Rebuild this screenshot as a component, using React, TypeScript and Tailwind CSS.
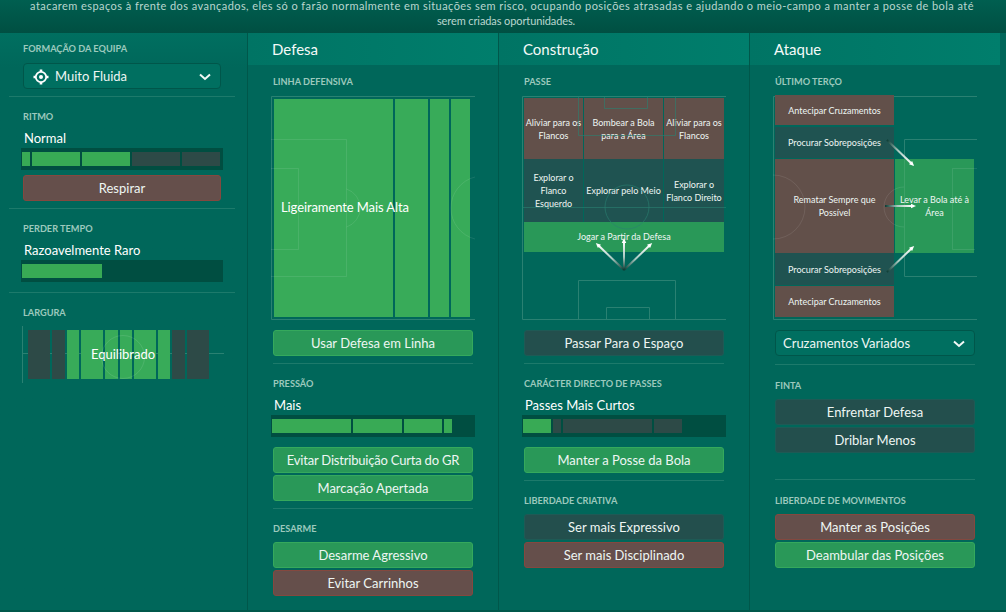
import React from "react";

const font = { fontFamily: "Lato, 'Open Sans', sans-serif" };

const Label = ({ children, cls = "" }: { children: React.ReactNode; cls?: string }) => (
  <div className={`h-[12px] text-[9.2px] leading-[14px] font-bold uppercase text-[#9cc9bd] ${cls}`}>{children}</div>
);

const Divider = ({ cls = "" }: { cls?: string }) => <div className={`h-px bg-[#1d7a6b] ${cls}`} />;

const variants = {
  green: "bg-[#299858] border-[#35a95c]",
  brown: "bg-[#654f4b] border-[#84483f]",
  dark: "bg-[#234f4d] border-[#1e5a55]",
};

const Btn = ({ v, children, cls = "", w = "w-[200px]" }: { v: keyof typeof variants; children: React.ReactNode; cls?: string; w?: string }) => (
  <div className={`h-[26px] ${w} rounded-[3px] border flex items-center justify-center pt-[1px] text-[13px] text-[#eef6f3] ${variants[v]} ${cls}`}>
    {children}
  </div>
);

const Bar = ({ segs, cls = "", w = "w-[204px]" }: { segs: [string, boolean][]; cls?: string; w?: string }) => (
  <div className={`h-[22px] ${w} bg-[#004e41] flex items-center gap-[2px] pl-[1px] ${cls}`}>
    {segs.map(([sw, on], i) => (
      <div key={i} className={`h-[14px] ${sw} ${on ? "bg-[#38aa55]" : "bg-[#2d4a47]"}`} />
    ))}
  </div>
);

const Value = ({ children, cls = "" }: { children: React.ReactNode; cls?: string }) => (
  <div className={`h-[16px] text-[13px] leading-[16px] text-white pl-[1px] ${cls}`}>{children}</div>
);

const Select = ({ children, icon, cls = "", w = "w-[198px]" }: { children: React.ReactNode; icon?: React.ReactNode; cls?: string; w?: string }) => (
  <div className={`h-[26px] ${w} rounded-[4px] border border-[#00564a] bg-[#006f60] flex items-center pt-[1px] text-[13px] text-[#eef6f3] ${cls}`}>
    {icon}
    <span className="flex-1">{children}</span>
    <svg width="12" height="8" viewBox="0 0 12 8" className="mr-[9px]" fill="none" stroke="#f2f8f6" strokeWidth="2"><path d="M1 1.5 L6 6 L11 1.5" /></svg>
  </div>
);

const Arrow = ({ x1, y1, x2, y2, id }: { x1: number; y1: number; x2: number; y2: number; id: string }) => {
  const a = Math.atan2(y2 - y1, x2 - x1);
  const tip = (r: number, o: number) => `${x2 + r * Math.cos(a + o)},${y2 + r * Math.sin(a + o)}`;
  return (
    <>
      <defs>
        <linearGradient id={id} gradientUnits="userSpaceOnUse" x1={x1} y1={y1} x2={x2} y2={y2}>
          <stop offset="0" stopColor="#0b3b33" />
          <stop offset="0.45" stopColor="#a9c9c0" />
          <stop offset="1" stopColor="#ffffff" />
        </linearGradient>
      </defs>
      <line x1={x1} y1={y1} x2={x2} y2={y2} stroke={`url(#${id})`} strokeWidth="2" />
      <polygon points={`${tip(3, 0)} ${tip(3, 2.3)} ${tip(3, -2.3)}`} fill="#ffffff" stroke="none" />
    </>
  );
};

const line = "#2a8172";
const faint = "rgba(255,255,255,0.09)";

const PitchDefesa = () => (
  <div className="relative h-[224px] w-[204px] mt-[9px] -ml-[2px]">
    <div className="absolute inset-0 flex gap-[2px] pl-[3px] pr-[5px] py-[3px]">
      <div className="w-[119px] bg-[#38ab59]" />
      <div className="w-[33px] bg-[#38ab59]" />
      <div className="w-[19px] bg-[#38ab59]" />
      <div className="w-[19px] bg-[#38ab59]" />
    </div>
    <svg className="absolute inset-0" width="204" height="224" fill="none" stroke={line}>
      <path d="M204 .5H.5V223.5H204" />
      <path d="M0 43.5H75.5V180.5H0" stroke={faint} />
      <path d="M0 72.5H27.5V153.5H0" stroke={faint} />
      <path d="M75.5 93 A 20 20 0 0 1 75.5 131" stroke={faint} />
      <path d="M204 81 A 32 32 0 0 0 204 143" stroke={faint} />
    </svg>
    <div className="absolute left-[10px] top-[103px] text-[13px] leading-[16px] tracking-[-0.1px] text-white">Ligeiramente Mais Alta</div>
  </div>
);

const Zone = ({ c, children, cls = "" }: { c: string; children?: React.ReactNode; cls?: string }) => (
  <div className={`flex items-center justify-center text-center text-[9px] leading-[13px] text-[#eef6f3] px-[1px] ${c} ${cls}`}>
    <span>{children}</span>
  </div>
);

const PitchPasse = () => (
  <div className="relative h-[224px] w-[204px] mt-[9px] -ml-[2px]">
    <div className="absolute left-[2px] top-[2px] w-[200px] flex flex-col">
      <div className="flex h-[61px] gap-px">
        <Zone c="bg-[#62504a]" cls="w-[59px]">Aliviar para os Flancos</Zone>
        <Zone c="bg-[#62504a]" cls="w-[79px]">Bombear a Bola para a Área</Zone>
        <Zone c="bg-[#62504a]" cls="w-[60px]">Aliviar para os Flancos</Zone>
      </div>
      <div className="flex h-[63px] gap-px">
        <Zone c="bg-[#1f5351]" cls="w-[59px]">Explorar o Flanco Esquerdo</Zone>
        <Zone c="bg-[#1f5351]" cls="w-[79px]">Explorar pelo Meio</Zone>
        <Zone c="bg-[#1f5351]" cls="w-[60px]">Explorar o Flanco Direito</Zone>
      </div>
      <Zone c="bg-[#299858]" cls="h-[30px] pb-[2px]">Jogar a Partir da Defesa</Zone>
    </div>
    <svg className="absolute inset-0" width="204" height="224" fill="none" stroke={line}>
      <path d="M204 .5H.5V223.5H204" />
      <path d="M56.5 0V39.5H153.5V0" opacity=".6" />
      <path d="M82.5 0V12.5H125.5V0" opacity=".6" />
      <path d="M0 111.5H204" opacity=".6" />
      <circle cx="105" cy="111" r="22" opacity=".6" />
      <path d="M56.5 224V184.5H153.5V224" />
      <path d="M84.5 224V211.5H127.5V224" />
      <Arrow id="a1" x1={102} y1={174} x2={76} y2={149} />
      <Arrow id="a2" x1={102} y1={174} x2={102} y2={145} />
      <Arrow id="a3" x1={102} y1={174} x2={128} y2={149} />
    </svg>
  </div>
);

const PitchAtaque = () => (
  <div className="relative h-[224px] w-[204px] mt-[9px] -ml-[2px]">
    <svg className="absolute inset-0" width="204" height="224" fill="none" stroke={line}>
      <path d="M204 .5H.5V223.5H204" />
      <path d="M204 43.5H131.5V180.5H204" />
    </svg>
    <div className="absolute left-[2px] top-[-1px] flex">
      <div className="w-[119px] flex flex-col">
        <Zone c="bg-[#62504a]" cls="h-[30px]">Antecipar Cruzamentos</Zone>
        <div className="h-[2px]" />
        <Zone c="bg-[#1f5351]" cls="h-[31px]">Procurar Sobreposições</Zone>
        <div className="h-px" />
        <Zone c="bg-[#62504a]" cls="h-[94px] px-[10px]">Rematar Sempre que Possível</Zone>
        <Zone c="bg-[#1f5351]" cls="h-[32px]">Procurar Sobreposições</Zone>
        <div className="h-px" />
        <Zone c="bg-[#62504a]" cls="h-[31px]">Antecipar Cruzamentos</Zone>
      </div>
      <div className="ml-px w-[79px] mt-[64px] h-[94px]">
        <Zone c="bg-[#299858]" cls="h-full px-[3px]">Levar a Bola até à Área</Zone>
      </div>
    </div>
    <svg className="absolute inset-0" width="204" height="224" fill="none" stroke={line}>
      <path d="M0 79 A 32 32 0 0 1 0 143" stroke={faint} />
      <path d="M131.5 64V158" stroke={faint} />
      <path d="M204 72.5H179.5V153.5H202" stroke={faint} />
      <path d="M131 91 A 20 20 0 0 0 131 131" stroke={faint} />
      <Arrow id="b1" x1={114} y1={44} x2={139} y2={68} />
      <Arrow id="b2" x1={112} y1={110} x2={140} y2={110} />
      <Arrow id="b3" x1={114} y1={176} x2={139} y2={152} />
    </svg>
  </div>
);

const Header = ({ children }: { children: React.ReactNode }) => (
  <div className="h-[32px] bg-gradient-to-r from-[#007464] to-[#007e6c] pl-[24px] flex items-center text-[15px] text-[#f4faf8]">{children}</div>
);

const Column = ({ children }: { children: React.ReactNode }) => (
  <div className="w-[251px] border-r border-[#00574a]">{children}</div>
);

const Largura = () => (
  <div className="relative h-[57px] w-[202px] mt-[8px] -ml-[1px]">
    <div className="absolute inset-x-0 top-[27px] h-px bg-[#2a8172]" />
    <div className="absolute left-0 inset-y-0 w-px bg-[#2a8172]" />
    <div className="absolute left-[6px] top-[4px] h-[49px] flex gap-[2px]">
      {[["w-[22px]", 0], ["w-[13px]", 0], ["w-[12px]", 1], ["w-[22px]", 1], ["w-[13px]", 1], ["w-[12px]", 1], ["w-[22px]", 1], ["w-[12px]", 1], ["w-[13px]", 0], ["w-[22px]", 0]].map(([w, on], i) => (
        <div key={i} className={`h-full ${w} ${on ? "bg-[#38ab59]" : "bg-[#2d4a47]"}`} />
      ))}
    </div>
    <div className="absolute left-[79px] top-[9px] h-[44px] w-[44px] rounded-full border border-white/10" />
    <div className="absolute inset-x-0 top-[20px] text-center text-[13px] leading-[16px] text-white">Equilibrado</div>
  </div>
);

export default function App() {
  return (
    <div style={font} className="w-[1006px] h-[612px] overflow-hidden bg-[#00584b] flex flex-col">
      <div className="h-[33px] overflow-hidden flex flex-col justify-end pb-[5px] pr-[2px] bg-gradient-to-b from-[#005f50] to-[#004f42] text-center text-[11px] leading-[15px] tracking-[0.44px] text-[#b9d6ce]">
        <div className="whitespace-nowrap">atacarem espaços à frente dos avançados, eles só o farão normalmente em situações sem risco, ocupando posições atrasadas e ajudando o meio-campo a manter a posse de bola até</div>
        <div className="tracking-[-0.1px] pl-[8px]">serem criadas oportunidades.</div>
      </div>
      <div className="h-[577px] flex bg-[#00675a]">
        <div className="w-[248px] border-r border-[#00574a] bg-gradient-to-b from-[#006f60] to-[#00675a] to-[6%]">
          <div className="pl-[23px] pt-[9px]">
            <Label>Formação da Equipa</Label>
            <Select
              cls="mt-[9px]"
              icon={
                <svg width="16" height="16" viewBox="0 0 16 16" className="ml-[9px] mr-[6px]" fill="none" stroke="#ffffff">
                  <circle cx="8" cy="8" r="5.2" strokeWidth="1.8" />
                  <circle cx="8" cy="8" r="2" fill="#ffffff" stroke="none" />
                  <path d="M8 .5V3M8 13V15.5M.5 8H3M13 8H15.5" strokeWidth="2.6" />
                </svg>
              }
            >
              Muito Fluida
            </Select>
          </div>
          <Divider cls="w-[226px] ml-[9px] mt-[7px]" />
          <div className="pl-[23px] pt-[13px]">
            <Label>Ritmo</Label>
            <Value cls="mt-[8px]">Normal</Value>
            <Bar w="w-[202px]" cls="mt-[2px] -ml-[2px]" segs={[["w-[8px]", true], ["w-[48px]", true], ["w-[48px]", true], ["w-[48px]", false], ["w-[38px]", false]]} />
            <Btn w="w-[198px]" v="brown" cls="mt-[5px]">Respirar</Btn>
          </div>
          <Divider cls="w-[226px] ml-[9px] mt-[7px]" />
          <div className="pl-[23px] pt-[13px]">
            <Label>Perder Tempo</Label>
            <Value cls="mt-[8px]">Razoavelmente Raro</Value>
            <Bar w="w-[202px]" cls="mt-[2px] -ml-[2px]" segs={[["w-[80px]", true]]} />
          </div>
          <Divider cls="w-[226px] ml-[9px] mt-[10px]" />
          <div className="pl-[23px] pt-[13px]">
            <Label>Largura</Label>
            <Largura />
          </div>
        </div>

        <Column>
          <Header>Defesa</Header>
          <div className="pl-[25px] pt-[10px]">
            <Label>Linha Defensiva</Label>
            <PitchDefesa />
            <Btn v="green" cls="mt-[10px]">Usar Defesa em Linha</Btn>
            <Divider cls="w-[200px] mt-[7px]" />
            <Label cls="mt-[13px]">Pressão</Label>
            <Value cls="mt-[8px]">Mais</Value>
            <Bar cls="mt-[2px] -ml-[2px]" segs={[["w-[79px]", true], ["w-[49px]", true], ["w-[38px]", true], ["w-[8px]", true]]} />
            <Btn v="green" cls="mt-[10px]"><span className="tracking-[-0.2px]">Evitar Distribuição Curta do GR</span></Btn>
            <Btn v="green" cls="mt-[2px]">Marcação Apertada</Btn>
            <Divider cls="w-[200px] mt-[7px]" />
            <Label cls="mt-[13px]">Desarme</Label>
            <Btn v="green" cls="mt-[8px]">Desarme Agressivo</Btn>
            <Btn v="brown" cls="mt-[2px]">Evitar Carrinhos</Btn>
          </div>
        </Column>

        <Column>
          <Header>Construção</Header>
          <div className="pl-[25px] pt-[10px]">
            <Label>Passe</Label>
            <PitchPasse />
            <Btn v="dark" cls="mt-[10px]">Passar Para o Espaço</Btn>
            <Divider cls="w-[200px] mt-[7px]" />
            <Label cls="mt-[13px]">Carácter Directo de Passes</Label>
            <Value cls="mt-[8px]">Passes Mais Curtos</Value>
            <Bar cls="mt-[2px] -ml-[2px]" segs={[["w-[28px]", true], ["w-[8px]", false], ["w-[89px]", false], ["w-[28px]", false]]} />
            <Btn v="green" cls="mt-[10px]">Manter a Posse da Bola</Btn>
            <Divider cls="w-[200px] mt-[7px]" />
            <Label cls="mt-[13px]">Liberdade Criativa</Label>
            <Btn v="dark" cls="mt-[8px]">Ser mais Expressivo</Btn>
            <Btn v="brown" cls="mt-[2px]">Ser mais Disciplinado</Btn>
          </div>
        </Column>

        <div className="w-[250px]">
          <Header>Ataque</Header>
          <div className="pl-[25px] pt-[10px]">
            <Label>Último Terço</Label>
            <PitchAtaque />
            <Select w="w-[200px]" cls="mt-[10px] pl-[7px]">Cruzamentos Variados</Select>
            <Divider cls="w-[200px] mt-[8px]" />
            <Label cls="mt-[14px]">Finta</Label>
            <Btn v="dark" cls="mt-[8px]">Enfrentar Defesa</Btn>
            <Btn v="dark" cls="mt-[2px]">Driblar Menos</Btn>
            <Divider cls="w-[200px] mt-[26px]" />
            <Label cls="mt-[14px]">Liberdade de Movimentos</Label>
            <Btn v="brown" cls="mt-[8px]">Manter as Posições</Btn>
            <Btn v="green" cls="mt-[2px]">Deambular das Posições</Btn>
          </div>
        </div>
      </div>
    </div>
  );
}
